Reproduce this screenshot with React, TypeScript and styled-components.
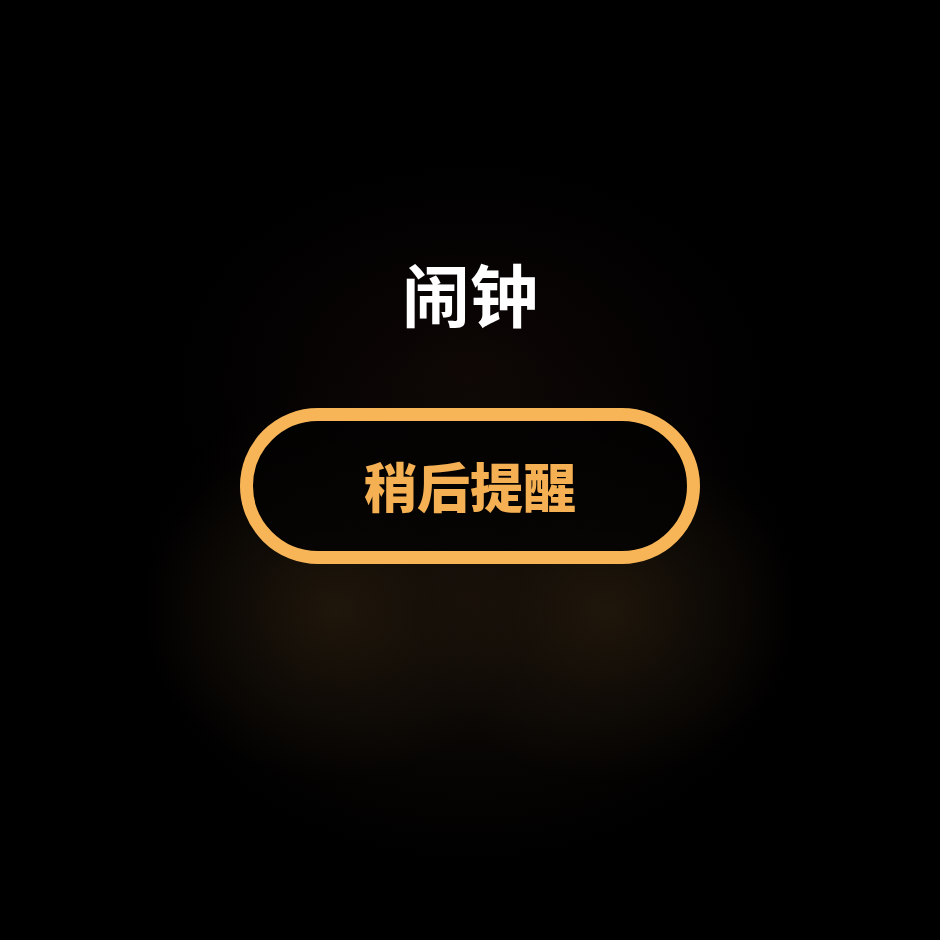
import React from 'react';
import styled, { createGlobalStyle } from 'styled-components';

const GlobalStyle = createGlobalStyle`
  html, body {
    margin: 0;
    padding: 0;
    background: #000;
  }
  body {
    font-family: "Noto Sans CJK SC", "Noto Sans", sans-serif;
  }
`;

const Screen = styled.div`
  width: 940px;
  height: 940px;
  display: flex;
  flex-direction: column;
  align-items: center;
  box-sizing: border-box;
  padding-top: 252px;
  background:
    radial-gradient(ellipse 190px 170px at 335px 610px, rgba(36, 26, 12, 0.8) 0%, rgba(28, 20, 10, 0.45) 50%, rgba(0, 0, 0, 0) 100%),
    radial-gradient(ellipse 190px 170px at 605px 610px, rgba(36, 26, 12, 0.8) 0%, rgba(28, 20, 10, 0.45) 50%, rgba(0, 0, 0, 0) 100%),
    radial-gradient(ellipse 330px 260px at 470px 600px, rgba(22, 15, 9, 0.9) 0%, rgba(14, 10, 6, 0.6) 55%, rgba(0, 0, 0, 0) 100%),
    radial-gradient(ellipse 300px 220px at 470px 380px, rgba(16, 8, 6, 0.9) 0%, rgba(8, 4, 3, 0.6) 60%, rgba(0, 0, 0, 0) 100%),
    #000;
`;

const Title = styled.h1`
  margin: 0;
  color: #ffffff;
  font-size: 68px;
  font-weight: 700;
  line-height: 1.2;
  letter-spacing: 0;
`;

const SnoozeButton = styled.button`
  margin-top: 74px;
  width: 460px;
  height: 156px;
  box-sizing: border-box;
  border: 13px solid #f7b557;
  border-radius: 999px;
  background: rgba(2, 1, 1, 0.7);
  display: flex;
  align-items: center;
  justify-content: center;
  padding: 0;
  cursor: pointer;
  color: #f4b053;
  font-family: "Noto Sans CJK SC", "Noto Sans", sans-serif;
  font-size: 53px;
  font-weight: 900;
  line-height: 1;
`;

export default function App() {
  return (
    <>
      <GlobalStyle />
      <Screen>
        <Title>闹钟</Title>
        <SnoozeButton>稍后提醒</SnoozeButton>
      </Screen>
    </>
  );
}
